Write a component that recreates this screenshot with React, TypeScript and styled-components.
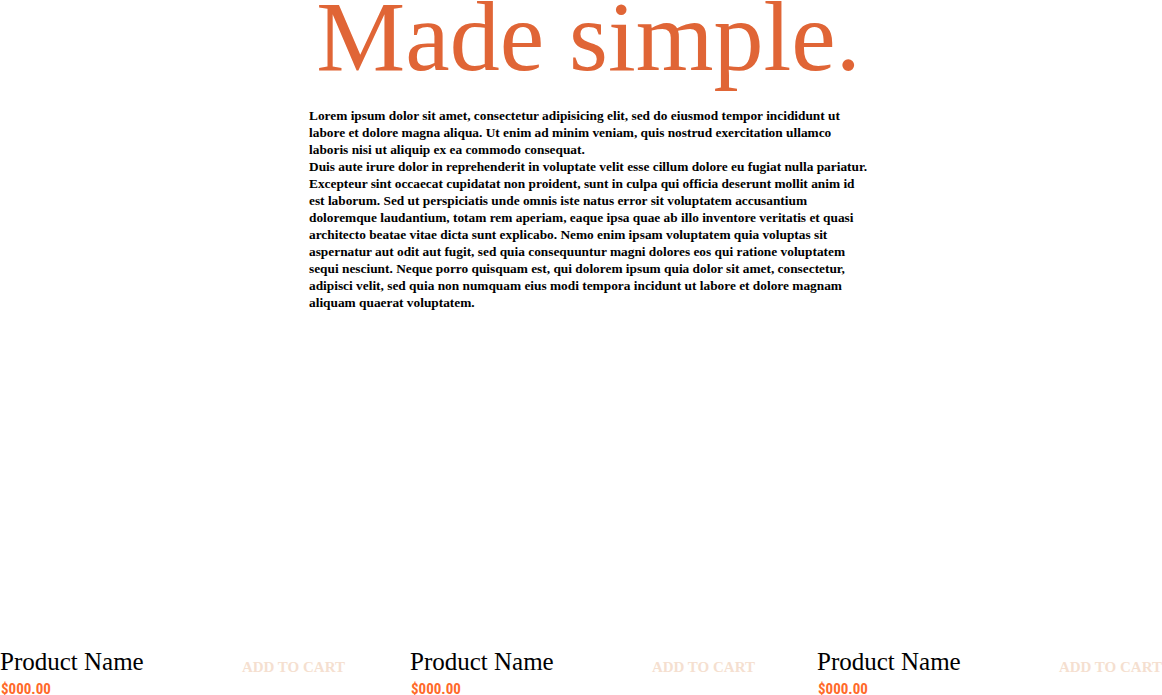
import React from "react";
import styled, { createGlobalStyle } from "styled-components";

const Global = createGlobalStyle`
  html, body { margin: 0; padding: 0; background: #ffffff; }
  body { font-family: "Liberation Serif", "Times New Roman", serif; color: #000; }
`;

const Page = styled.div`
  width: 1162px;
  height: 695px;
  overflow: hidden;
  display: flex;
  flex-direction: column;
`;

const Hero = styled.section`
  display: flex;
  flex-direction: column;
  align-items: center;
  padding-left: 15px;
`;

const Title = styled.h1`
  margin: 0;
  font-family: "Liberation Serif", "Times New Roman", serif;
  font-weight: 400;
  font-size: 100px;
  line-height: 0.74;
  color: #e06536;
  white-space: nowrap;
`;

const Copy = styled.div`
  width: 559px;
  margin-top: 33px;
`;

const Para = styled.p`
  margin: 0;
  font-family: "Liberation Serif", "Times New Roman", serif;
  font-weight: 700;
  font-size: 13.35px;
  line-height: 17px;
  white-space: pre;
  color: #000;
`;

const Products = styled.section`
  margin-top: 337px;
  display: flex;
  justify-content: space-between;
`;

const Card = styled.article`
  width: 345px;
  display: flex;
  flex-direction: column;
  gap: 6px;
  &:nth-child(2) {
    margin-left: 3px;
  }
`;

const CardTop = styled.div`
  display: flex;
  justify-content: space-between;
  align-items: flex-end;
`;

const Name = styled.h3`
  margin: 0;
  font-family: "Liberation Serif", "Times New Roman", serif;
  font-weight: 400;
  font-size: 25px;
  line-height: normal;
  color: #000;
`;

const CartButton = styled.button`
  border: none;
  background: none;
  padding: 0;
  font-family: "Liberation Serif", "Times New Roman", serif;
  font-weight: 700;
  font-size: 15px;
  line-height: normal;
  color: #f5dfd0;
  cursor: pointer;
`;

const Price = styled.span`
  font-family: "Liberation Sans Narrow", "Roboto Condensed", "DejaVu Sans", sans-serif;
  font-stretch: condensed;
  font-weight: 700;
  font-size: 15px;
  line-height: 15px;
  padding-left: 1px;
  color: #ff6a2a;
`;

const p1 = `Lorem ipsum dolor sit amet, consectetur adipisicing elit, sed do eiusmod tempor incididunt ut
labore et dolore magna aliqua. Ut enim ad minim veniam, quis nostrud exercitation ullamco
laboris nisi ut aliquip ex ea commodo consequat.`;

const p2 = `Duis aute irure dolor in reprehenderit in voluptate velit esse cillum dolore eu fugiat nulla pariatur.
Excepteur sint occaecat cupidatat non proident, sunt in culpa qui officia deserunt mollit anim id
est laborum. Sed ut perspiciatis unde omnis iste natus error sit voluptatem accusantium
doloremque laudantium, totam rem aperiam, eaque ipsa quae ab illo inventore veritatis et quasi
architecto beatae vitae dicta sunt explicabo. Nemo enim ipsam voluptatem quia voluptas sit
aspernatur aut odit aut fugit, sed quia consequuntur magni dolores eos qui ratione voluptatem
sequi nesciunt. Neque porro quisquam est, qui dolorem ipsum quia dolor sit amet, consectetur,
adipisci velit, sed quia non numquam eius modi tempora incidunt ut labore et dolore magnam
aliquam quaerat voluptatem.`;

const products = [1, 2, 3];

export default function App() {
  return (
    <Page>
      <Global />
      <Hero>
        <Title>Made simple.</Title>
        <Copy>
          <Para>{p1}</Para>
          <Para>{p2}</Para>
        </Copy>
      </Hero>
      <Products>
        {products.map((id) => (
          <Card key={id}>
            <CardTop>
              <Name>Product Name</Name>
              <CartButton>ADD TO CART</CartButton>
            </CardTop>
            <Price>$000.00</Price>
          </Card>
        ))}
      </Products>
    </Page>
  );
}
